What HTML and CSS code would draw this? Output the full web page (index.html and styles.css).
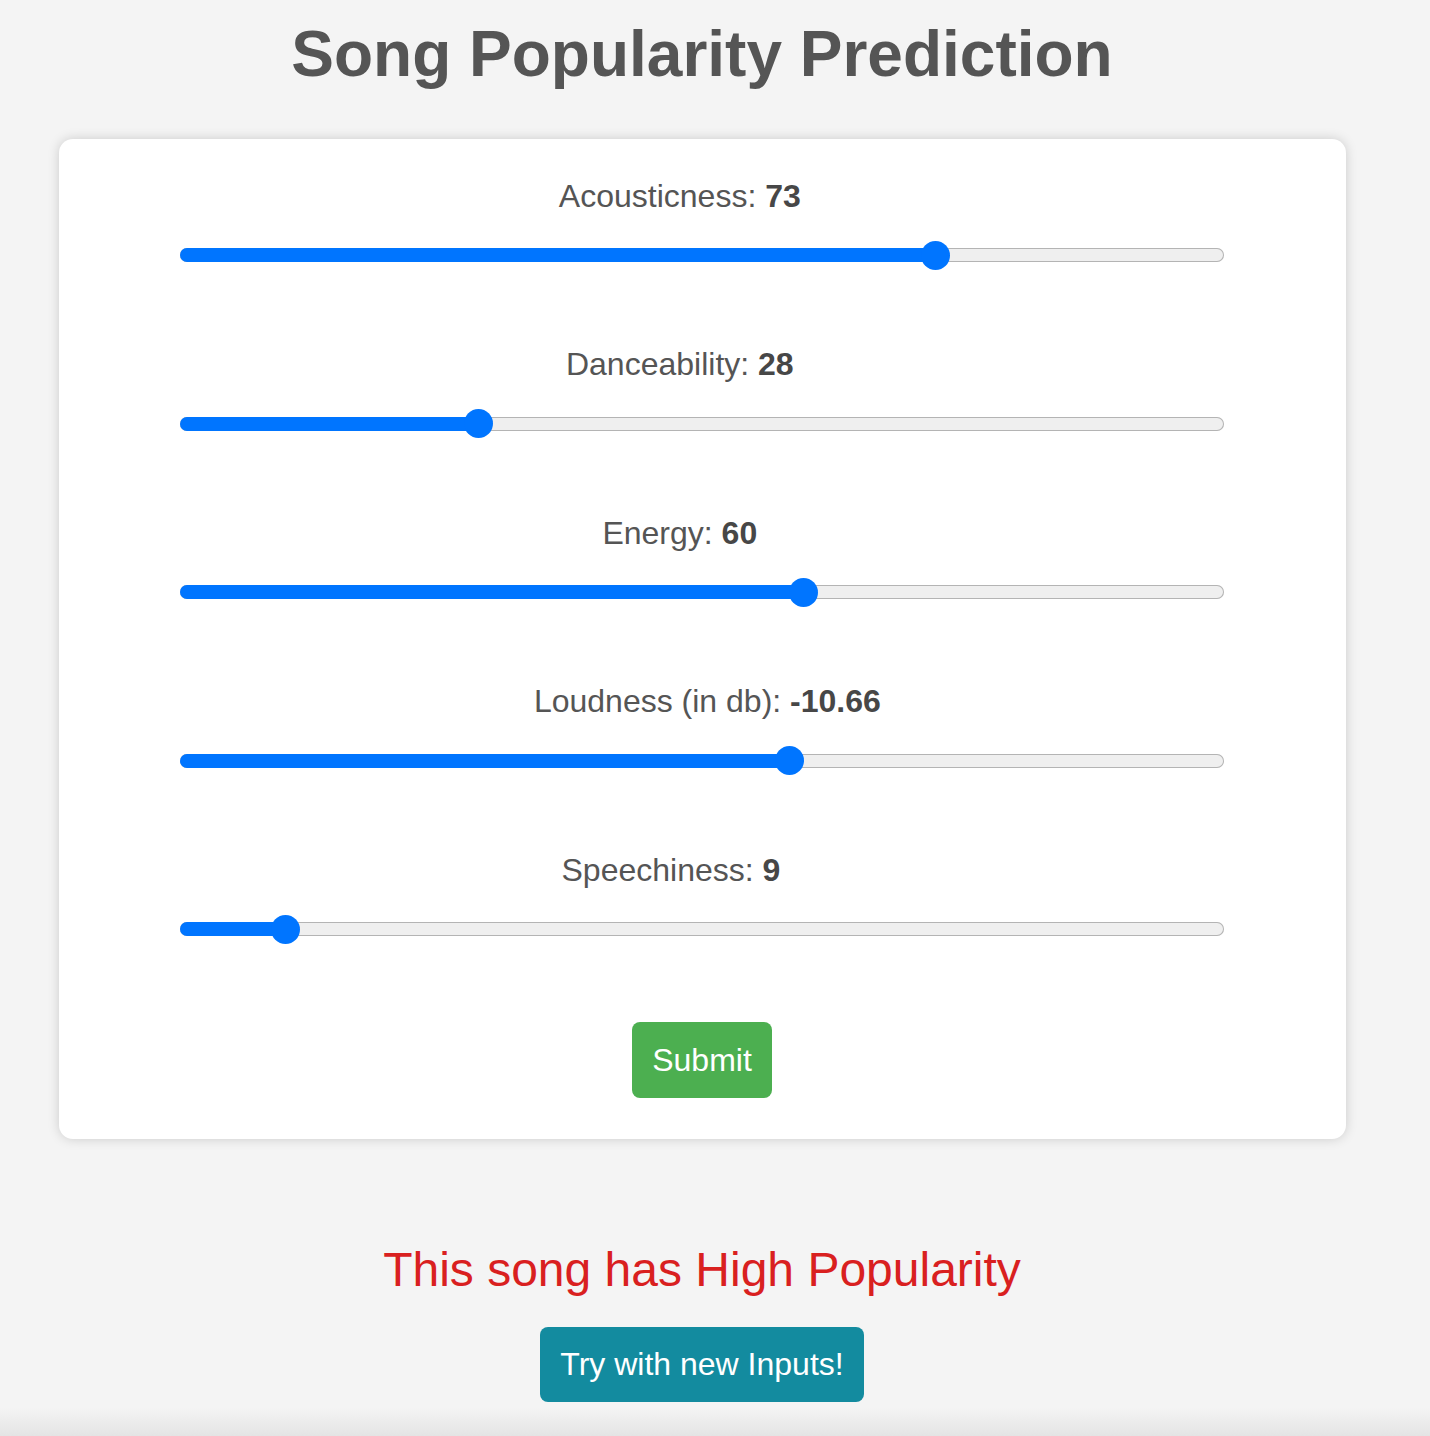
FILE: index.html
```html
<!DOCTYPE html>
<html lang="en">
<head>
<meta charset="utf-8">
<title>Song Popularity Prediction</title>
<link rel="stylesheet" href="styles.css">
</head>
<body>
<main class="page">
  <h1 class="title">Song Popularity Prediction</h1>
  <form class="card">
    <div class="field">
      <label class="label">Acousticness: <span class="val">73</span></label>
      <div class="range" style="--p:0.73"><div class="fill"></div><span class="thumb"></span></div>
    </div>
    <div class="field">
      <label class="label">Danceability: <span class="val">28</span></label>
      <div class="range" style="--p:0.28"><div class="fill"></div><span class="thumb"></span></div>
    </div>
    <div class="field">
      <label class="label">Energy: <span class="val">60</span></label>
      <div class="range" style="--p:0.60"><div class="fill"></div><span class="thumb"></span></div>
    </div>
    <div class="field">
      <label class="label">Loudness (in db): <span class="val">-10.66</span></label>
      <div class="range" style="--p:0.586"><div class="fill"></div><span class="thumb"></span></div>
    </div>
    <div class="field">
      <label class="label">Speechiness: <span class="val">9</span></label>
      <div class="range" style="--p:0.09"><div class="fill"></div><span class="thumb"></span></div>
    </div>
    <button type="button" class="btn btn-submit">Submit</button>
  </form>
  <p class="result">This song has High Popularity</p>
  <button type="button" class="btn btn-retry">Try with new Inputs!</button>
</main>
</body>
</html>
```
FILE: styles.css
```css
html {
  background: linear-gradient(to bottom, #f4f4f4 0, #f4f4f4 1408px, #e4e4e4 1436px);
  min-height: 100%;
}
body {
  margin: 0;
  font-family: "Liberation Sans", Arial, sans-serif;
  color: #555;
}
.page {
  width: 1404px;
  display: flex;
  flex-direction: column;
  align-items: center;
  padding-top: 18px;
}
.title {
  margin: 0;
  font-size: 64px;
  font-weight: bold;
  color: #555;
  line-height: 73.6px;
}
.card {
  margin-top: 47.5px;
  width: 1287px;
  box-sizing: border-box;
  background: #fff;
  border-radius: 14px;
  box-shadow: 0 0 12px rgba(0, 0, 0, 0.17);
  padding: 38.5px 0 41.5px;
  display: flex;
  flex-direction: column;
  align-items: center;
  gap: 83.7px;
}
.field {
  display: flex;
  flex-direction: column;
  align-items: center;
}
.label {
  font-size: 32px;
  line-height: 36.8px;
  color: #555;
  text-align: center;
}
.val {
  display: inline-block;
  width: 80px;
  text-align: left;
  white-space: nowrap;
  font-weight: bold;
  color: #474747;
}
.range {
  position: relative;
  margin-top: 34px;
  width: 1044px;
  height: 14px;
  border-radius: 7px;
  background: #efefef;
  box-shadow: inset 0 0 0 1px #b4b4b4;
}
.fill {
  height: 14px;
  width: calc(14.5px + (100% - 29px) * var(--p));
  background: #0075ff;
  border-radius: 7px 0 0 7px;
}
.thumb {
  position: absolute;
  top: 50%;
  left: calc(14.5px + (100% - 29px) * var(--p));
  width: 29px;
  height: 29px;
  margin: -14.5px 0 0 -14.5px;
  border-radius: 50%;
  background: #0075ff;
}
.btn {
  border: none;
  font-family: "Liberation Sans", Arial, sans-serif;
  font-size: 32px;
  line-height: 36.8px;
  color: #fff;
  padding: 19px 20px;
  border-radius: 8px;
  cursor: pointer;
}
.btn-submit {
  margin-top: 2px;
  background: #4caf50;
  padding: 19.5px 20px;
}
.result {
  margin: 103px 0 0;
  font-size: 48px;
  line-height: 55.2px;
  color: #d9201f;
}
.btn-retry {
  margin-top: 29px;
  background: #138b9f;
  padding: 19.5px 20px;
}
```
